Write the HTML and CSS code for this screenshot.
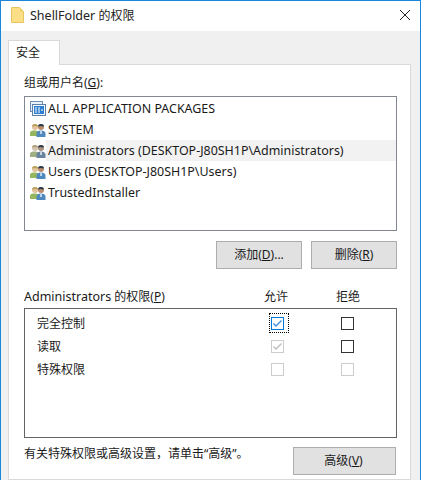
FILE: index.html
```html
<!DOCTYPE html>
<html lang="zh-CN">
<head>
  <meta charset="UTF-8" />
  <title>ShellFolder 的权限</title>
  <link rel="stylesheet" href="styles.css">
</head>
<body>
  <svg width="0" height="0" class="defs">
    <defs>
      <symbol id="users" viewBox="0 0 16 16">
        <circle cx="5" cy="5" r="3" fill="#e2c39a"/>
        <path d="M2 4C2.500 1.200 7.500 1.200 8 4L7.500 4.500C6 3.800 4 3.800 2.500 4.500Z" fill="#b9a15c"/>
        <path d="M0 14V11C0 9 2 8.500 5 8.500C8 8.500 9 9.500 9 11V14Z" fill="#93b65f"/>
        <circle cx="11" cy="5" r="3" fill="#b98d6c"/>
        <path d="M8 4C8.500 1.200 13.500 1.200 14 4L13 4.500C11.500 3.800 10 3.800 8.800 4.500Z" fill="#27394f"/>
        <path d="M6.500 15V11.500C6.500 9.500 8.500 8.500 11 8.500C13.500 8.500 15.500 9.500 15.500 11.500V15Z" fill="#4f88bd"/>
        <path d="M10 8.500H12V12H10Z" fill="#b8d3ea"/>
      </symbol>
    </defs>
  </svg>

  <div class="dialog">
    <div class="titlebar">
      <svg class="folder-icon" width="13" height="16" viewBox="0 0 13 16">
        <path d="M.5.500H8.500L12.500 4.500V15.500H.5Z" fill="#fbdf86" stroke="#e6c45f"/>
        <path d="M9 1V5H12" fill="#f6d26d"/>
      </svg>
      <span class="title"><span class="latin">ShellFolder</span> 的权限</span>
      <svg class="close-icon" width="10" height="10" viewBox="0 0 10 10">
        <path d="M0 0L10 10M10 0L0 10" stroke="#222" stroke-width="1" fill="none"/>
      </svg>
    </div>

    <div class="content">
      <div class="tabs">
        <div class="tab">安全</div>
      </div>

      <div class="panel">
        <div class="field-label">组或用户名(<u>G</u>):</div>

        <div class="user-list">
          <div class="user-row">
            <svg class="user-icon" width="16" height="16" viewBox="0 0 16 16">
              <rect x="0.500" y="0.500" width="12" height="10" fill="#e8f1fa" stroke="#6f8fb0"/>
              <rect x="2.500" y="3.500" width="13" height="11" fill="#f4f8fc" stroke="#5b7fa6"/>
              <rect x="4" y="5" width="10" height="8" fill="#2f7fd0"/>
              <path d="M5 7H7M8 7H10M5 9H7M8 9H10M11 9H13M5 11H7M8 11H10" stroke="#fff"/>
            </svg>
            <span class="user-name">ALL APPLICATION PACKAGES</span>
          </div>
          <div class="user-row">
            <svg class="user-icon" width="16" height="16"><use href="#users"/></svg>
            <span class="user-name">SYSTEM</span>
          </div>
          <div class="user-row selected">
            <svg class="user-icon" width="16" height="16"><use href="#users"/></svg>
            <span class="user-name">Administrators (DESKTOP-J80SH1P\Administrators)</span>
          </div>
          <div class="user-row">
            <svg class="user-icon" width="16" height="16"><use href="#users"/></svg>
            <span class="user-name">Users (DESKTOP-J80SH1P\Users)</span>
          </div>
          <div class="user-row">
            <svg class="user-icon" width="16" height="16"><use href="#users"/></svg>
            <span class="user-name">TrustedInstaller</span>
          </div>
        </div>

        <div class="list-actions">
          <button class="btn">添加(<u>D</u>)...</button>
          <button class="btn">删除(<u>R</u>)</button>
        </div>

        <div class="perm-head">
          <div class="perm-name"><span class="latin">Administrators</span> 的权限(<u>P</u>)</div>
          <div class="perm-col">允许</div>
          <div class="perm-col">拒绝</div>
        </div>

        <div class="perm-box">
          <div class="perm-row">
            <div class="perm-name">完全控制</div>
            <div class="perm-col">
              <span class="check active">
                <svg width="11" height="11" viewBox="0 0 11 11"><path d="M1.500 5.500L4 8L9.500 2.500" fill="none" stroke="#3d8ee0" stroke-width="1.400"/></svg>
                <span class="focus-ring"></span>
              </span>
            </div>
            <div class="perm-col"><span class="check"></span></div>
          </div>
          <div class="perm-row">
            <div class="perm-name">读取</div>
            <div class="perm-col">
              <span class="check disabled">
                <svg width="11" height="11" viewBox="0 0 11 11"><path d="M1.500 5.500L4 8L9.500 2.500" fill="none" stroke="#bdbdbd" stroke-width="1.400"/></svg>
              </span>
            </div>
            <div class="perm-col"><span class="check"></span></div>
          </div>
          <div class="perm-row">
            <div class="perm-name">特殊权限</div>
            <div class="perm-col"><span class="check disabled"></span></div>
            <div class="perm-col"><span class="check disabled"></span></div>
          </div>
        </div>

        <div class="footer">
          <span class="hint">有关特殊权限或高级设置，请单击“高级”。</span>
          <button class="btn btn-wide">高级(<u>V</u>)</button>
        </div>
      </div>
    </div>
  </div>
</body>
</html>
```

FILE: styles.css
```css
* {
  box-sizing: border-box;
  margin: 0;
  padding: 0;
}

html, body {
  width: 421px;
  height: 480px;
  overflow: hidden;
}

body {
  font-family: "Noto Sans", "Noto Sans CJK SC", sans-serif;
  font-size: 12px;
  line-height: 16px;
  color: #1a1a1a;
  background: #f0f0f0;
}

.defs {
  position: absolute;
}

.latin {
  font-size: 12.5px;
}

.dialog {
  width: 421px;
  height: 480px;
  border: 1px solid #1a86d9;
  border-bottom: none;
  display: flex;
  flex-direction: column;
}

.titlebar {
  height: 30px;
  flex: none;
  background: #fff;
  display: flex;
  align-items: center;
  padding: 0 10px 0 10px;
}

.folder-icon {
  margin: 0 6px 2px 0;
}

.close-icon {
  margin-bottom: 2px;
}

.title {
  flex: 1;
  color: #222;
}

.content {
  flex: 1;
  padding: 9px 9px 0 7px;
  background: #f0f0f0;
  display: flex;
  flex-direction: column;
}

.tabs {
  display: flex;
  height: 24px;
  flex: none;
  position: relative;
  z-index: 1;
}

.tab {
  width: 52px;
  height: 25px;
  background: #fff;
  border: 1px solid #d9d9d9;
  border-bottom: none;
  padding: 4px 0 0 7px;
}

.panel {
  flex: 1;
  background: #fff;
  border: 1px solid #d9d9d9;
  padding: 9px 13px 0 15px;
}

.field-label {
  height: 22px;
  padding-top: 1px;
}

.user-list {
  height: 135px;
  border: 1px solid #828790;
  padding: 1px 0 0 5px;
}

.user-row {
  height: 21px;
  display: flex;
  align-items: center;
}

.user-icon {
  flex: none;
}

.user-name {
  flex: 1;
  height: 21px;
  line-height: 21px;
  padding-left: 2px;
  font-size: 12.45px;
}

.selected .user-name {
  background: #f2f2f2;
}

.selected .user-icon {
  filter: saturate(0.5);
}

.list-actions {
  display: flex;
  justify-content: flex-end;
  gap: 9px;
  margin-top: 10px;
}

.btn {
  width: 86px;
  height: 28px;
  background: #e1e1e1;
  border: 1px solid #adadad;
  font: inherit;
  color: #1a1a1a;
}

.btn-wide {
  width: 103px;
  margin-right: 1px;
  padding-right: 2px;
}

.perm-head {
  display: flex;
  align-items: flex-start;
  height: 21px;
  margin-top: 18px;
  padding: 2px 13px 0 0;
}

.perm-name {
  flex: 1;
}

.perm-col {
  width: 72px;
  display: flex;
  justify-content: center;
  align-items: center;
}

.perm-box {
  height: 130px;
  border: 1px solid #646464;
  padding: 3px 14px 0 12px;
}

.perm-row {
  display: flex;
  align-items: center;
  height: 23px;
}

.perm-row .perm-col {
  width: 69px;
  margin-left: 1px;
}

.check {
  position: relative;
  width: 13px;
  height: 13px;
  border: 1px solid #333;
  background: #fff;
  display: flex;
  align-items: center;
  justify-content: center;
}

.check.active {
  border-color: #0078d7;
}

.check.disabled {
  border-color: #ccc;
}

.focus-ring {
  position: absolute;
  left: -3px;
  top: -5px;
  width: 20px;
  height: 20px;
  border: 1px dotted #000;
}

.footer {
  display: flex;
  justify-content: space-between;
  margin-top: 9px;
}

.hint {
  margin-top: -1px;
}
```
